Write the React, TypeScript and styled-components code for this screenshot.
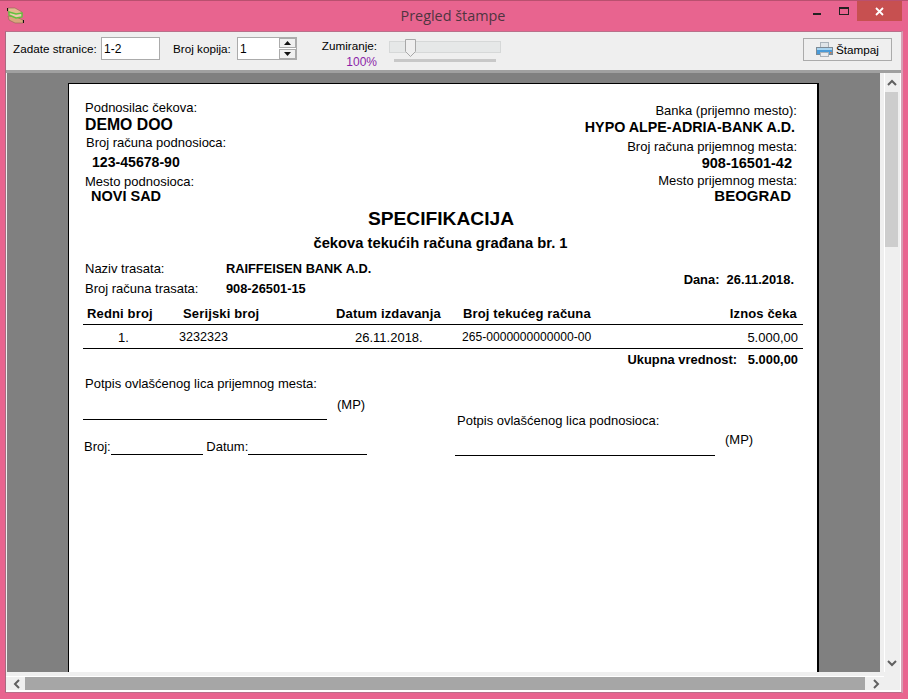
import React from "react";
import styled, {createGlobalStyle} from "styled-components";

const Global = createGlobalStyle`
    html, body {
        margin: 0;
        padding: 0;
        width: 908px;
        height: 699px;
        overflow: hidden;
    }
`;

const Win = styled.div`
    width: 908px;
    height: 699px;
    box-sizing: border-box;
    background: #e8648f;
    border-top: 1px solid #b9506f;
    display: flex;
    flex-direction: column;
    font-family: "Liberation Sans", Arial, sans-serif;
    color: #000;
`;

const TitleBar = styled.div`
    height: 30px;
    flex: none;
    display: flex;
    align-items: flex-start;
    position: relative;
    padding-left: 7px;
`;

const AppIcon = styled.svg`
    width: 17px;
    height: 17px;
    margin-top: 6px;
`;

const Title = styled.div`
    position: absolute;
    left: 0;
    right: 0;
    top: 6px;
    padding-right: 2px;
    text-align: center;
    font-family: "Open Sans", "Noto Sans", sans-serif;
    font-size: 14.4px;
    line-height: 18px;
    color: #4f3540;
`;

const Controls = styled.div`
    margin-left: auto;
    margin-right: 6px;
    display: flex;
`;

const Ctl = styled.div<{$w: number; $close?: boolean}>`
    width: ${p => p.$w}px;
    height: 20px;
    display: flex;
    align-items: center;
    justify-content: center;
    background: ${p => (p.$close ? "#c75050" : "transparent")};
`;

const Client = styled.div`
    flex: 1;
    margin: 0 5px 6px;
    background: #efefef;
    border-left: 1px solid #a86a80;
    border-top: 1px solid #b9708a;
    border-right: 2px solid #d7a0b4;
    border-bottom: 1px solid #b9708a;
    display: flex;
    flex-direction: column;
    min-height: 0;
`;

const Toolbar = styled.div`
    height: 38px;
    flex: none;
    background: #efefef;
    border-bottom: 3px solid #a0a0a0;
    display: flex;
    font-size: 11.7px;
    position: relative;
`;

const Label = styled.span<{$left: number; $w: number}>`
    margin-left: ${p => p.$left}px;
    width: ${p => p.$w}px;
    white-space: nowrap;
    margin-top: 9px;
    line-height: 15px;
`;

const Field = styled.div<{$w: number}>`
    width: ${p => p.$w}px;
    height: 23px;
    box-sizing: border-box;
    margin-top: 5px;
    margin-left: 4px;
    background: #fff;
    border: 1px solid #ababab;
    padding: 4px 2px 0 2px;
    line-height: 14px;
    font-size: 12px;
    position: relative;
`;

const Spin = styled.div`
    position: absolute;
    right: 0;
    top: 0;
    width: 17px;
    height: 21px;
    background: #fff;
    display: flex;
    flex-direction: column;
    gap: 1px;
`;

const SpinBtn = styled.div`
    flex: 1;
    background: #f0f0f0;
    border: 1px solid #ababab;
    display: flex;
    align-items: center;
    justify-content: center;
`;

const ZoomBox = styled.div`
    margin-left: 22px;
    width: 58px;
    text-align: right;
    padding-top: 6px;
    line-height: 15px;
`;

const Percent = styled.div`
    color: #8b1fa8;
    margin-top: 2px;
    line-height: 14px;
    font-size: 12px;
`;

const SliderWrap = styled.div`
    margin-left: 12px;
    width: 112px;
    position: relative;
`;

const Track = styled.div`
    position: absolute;
    left: 0;
    top: 9px;
    width: 110px;
    height: 10px;
    background: #e6e8e8;
    border: 1px solid #d6d8d8;
`;

const Ticks = styled.div`
    position: absolute;
    left: 5px;
    top: 27px;
    width: 102px;
    height: 3px;
    background: #c8c8c8;
`;

const Thumb = styled.svg`
    position: absolute;
    left: 16px;
    top: 7px;
`;

const PrintBtn = styled.div`
    margin-left: auto;
    margin-right: 9px;
    margin-top: 6px;
    width: 89px;
    height: 23px;
    box-sizing: border-box;
    border: 1px solid #ababab;
    background: #efefef;
    display: flex;
    align-items: center;
    padding-left: 12px;
    gap: 3px;
`;

const Body = styled.div`
    flex: 1;
    min-height: 0;
    display: grid;
    grid-template-columns: 1fr 16px;
    grid-template-rows: 1fr 18px;
    background: #efefef;
    border-bottom: 2px solid #fff;
    border-right: 1px solid #fff;
`;

const Preview = styled.div`
    background: #808080;
    margin-left: 1px;
    margin-right: 4px;
    padding: 10px 0 0 61px;
    overflow: hidden;
`;

const Sheet = styled.div`
    width: 751px;
    height: 700px;
    box-sizing: border-box;
    background: #fff;
    border: 1px solid #000;
    border-right-width: 2px;
    padding: 17px 20px 0 16px;
    font-size: 13px;
    line-height: 14px;
`;

const PartyRow = styled.div`
    display: flex;
    justify-content: space-between;
`;

const PartyCol = styled.div<{$right?: boolean}>`
    text-align: ${p => (p.$right ? "right" : "left")};
    display: flex;
    flex-direction: column;
`;

const Cap = styled.div<{$x?: number; $top?: number}>`
    margin-left: ${p => p.$x ?? 0}px;
    margin-top: ${p => p.$top ?? 0}px;
    line-height: 14px;
`;

const Val = styled.div<{$x?: number; $r?: number; $size?: number; $top?: number}>`
    font-weight: bold;
    font-size: ${p => p.$size ?? 14.5}px;
    line-height: 16px;
    margin-left: ${p => p.$x ?? 0}px;
    margin-right: ${p => p.$r ?? 0}px;
    margin-top: ${p => p.$top ?? 0}px;
`;

const Heading = styled.div`
    text-align: center;
    font-weight: bold;
    font-size: 19.2px;
    line-height: 20px;
    margin-top: 5px;
`;

const SubHeading = styled.div`
    text-align: center;
    font-weight: bold;
    font-size: 14.75px;
    line-height: 16px;
    margin-top: 6px;
    margin-right: 1px;
`;

const TraceRow = styled.div`
    display: flex;
    justify-content: space-between;
    margin-top: 10px;
`;

const TraceGrid = styled.div`
    display: grid;
    grid-template-columns: 141px auto;
    row-gap: 5px;
    line-height: 15px;
`;

const Strong = styled.span`
    font-weight: bold;
    font-size: 12.8px;
`;

const DateText = styled.div`
    font-weight: bold;
    font-size: 12.9px;
    margin-top: 12px;
    margin-right: 3px;
    white-space: pre;
`;

const TableHead = styled.div`
    display: grid;
    grid-template-columns: 87px 153px 126px 1fr 80px;
    margin: 11px -6px 0 -2px;
    height: 17px;
    border-bottom: 1px solid #000;
    font-weight: bold;
    line-height: 14px;
    letter-spacing: 0.15px;
`;

const Cell = styled.div<{$x?: number; $r?: number; $size?: number}>`
    padding-left: ${p => p.$x ?? 0}px;
    padding-right: ${p => p.$r ?? 0}px;
    text-align: ${p => (p.$r ? "right" : "left")};
    font-size: ${p => p.$size ?? 13}px;
    white-space: nowrap;
`;

const TableRow = styled.div`
    display: grid;
    grid-template-columns: 87px 153px 126px 1fr 80px;
    margin: 0 -6px 0 -2px;
    height: 23px;
    border-bottom: 1px solid #000;
    line-height: 25px;
`;

const Total = styled.div`
    display: flex;
    justify-content: flex-end;
    margin-top: 3px;
    margin-right: -1px;
    font-weight: bold;
    font-size: 12.9px;
    line-height: 16px;
    white-space: pre;
`;

const Signs = styled.div`
    display: flex;
    margin-left: -2px;
    margin-top: 9px;
`;

const SignLeft = styled.div`
    width: 372px;
    flex: none;
`;

const SignRight = styled.div`
    padding-top: 37px;
`;

const SignCap = styled.div<{$x?: number}>`
    margin-left: ${p => p.$x ?? 0}px;
    line-height: 14px;
`;

const LineRow = styled.div<{$top: number; $h: number; $w: number; $gap: number}>`
    display: grid;
    grid-template-columns: ${p => p.$w}px auto;
    column-gap: ${p => p.$gap}px;
    margin-top: ${p => p.$top}px;
    height: ${p => p.$h}px;
`;

const SignLine = styled.span`
    border-bottom: 1px solid #000;
`;

const Mp = styled.span<{$top?: number}>`
    margin-top: ${p => p.$top ?? 0}px;
    line-height: 14px;
`;

const NoRow = styled.div`
    display: flex;
    align-items: flex-end;
    margin-top: 19px;
    margin-left: 1px;
    line-height: 14px;
`;

const Blank = styled.span<{$w: number}>`
    width: ${p => p.$w}px;
    height: 15px;
    margin-bottom: -1px;
    border-bottom: 1px solid #000;
    display: inline-block;
`;

const VScroll = styled.div`
    background: #efefef;
    border-left: 1px solid #fff;
    display: flex;
    flex-direction: column;
    align-items: center;
    padding: 6px 2px 5px 0;
`;

const ChevronSvg = styled.svg`
    flex: none;
`;

const VThumb = styled.div`
    width: 13px;
    height: 155px;
    margin-top: 5px;
    margin-bottom: auto;
    background: #cdcdcd;
`;

const HScroll = styled.div`
    background: #efefef;
    padding-top: 4px;
`;

const HRail = styled.div`
    height: 14px;
    box-sizing: border-box;
    border-top: 1px solid #fff;
    display: flex;
    align-items: center;
    padding: 0 4px 0 7px;
`;

const HThumb = styled.div`
    flex: 1;
    height: 13px;
    margin: 0 7px 0 4px;
    background: #a6a6a6;
`;

const Corner = styled.div`
    background: #efefef;
`;

function Chevron({dir}: {dir: "up" | "down" | "left" | "right"}) {
    const paths = {
        up: "M1 6 L5 2 L9 6",
        down: "M1 2 L5 6 L9 2",
        left: "M6 1 L2 5 L6 9",
        right: "M2 1 L6 5 L2 9",
    };
    const horiz = dir === "left" || dir === "right";
    return (
        <ChevronSvg
            width={horiz ? 8 : 10}
            height={horiz ? 10 : 8}
            viewBox={horiz ? "0 0 8 10" : "0 0 10 8"}
        >
            <path d={paths[dir]} fill="none" stroke="#606060" strokeWidth="2"/>
        </ChevronSvg>
    );
}

function PrinterIcon() {
    return (
        <svg width="17" height="17" viewBox="0 0 17 17">
            <rect x="4.5" y="1.5" width="8" height="6" fill="#dfe4e8" stroke="#a9b2ba"/>
            <rect x="0.5" y="6.5" width="16" height="7" fill="#4a9bd8" stroke="#7c8a96"/>
            <rect x="1" y="7" width="15" height="2" fill="#a9d4f0"/>
            <rect x="4.5" y="11.5" width="8" height="4" fill="#e8ebee" stroke="#a9b2ba"/>
            <rect x="14" y="11" width="1.5" height="1.5" fill="#e87a30"/>
        </svg>
    );
}

function SandwichIcon() {
    return (
        <AppIcon viewBox="0 0 17 17">
            <path d="M1 1 L8 1 L15 5 L15 9 L8 7 L1 5 Z" fill="#e3b98f" stroke="#8a6a50" strokeWidth="0.6"/>
            <path d="M1 9 L9 10 L16 13 L16 16 L8 16 L2 13 Z" fill="#d9a57c" stroke="#8a6a50" strokeWidth="0.6"/>
            <path d="M2 5 L9 7 L15 6 L15 10 L9 11 L2 8 Z" fill="#efc9b0" stroke="#62c23e" strokeWidth="1.4"/>
            <rect x="0" y="1" width="1" height="3" fill="#111"/>
            <rect x="16" y="13" width="1" height="3" fill="#111"/>
        </AppIcon>
    );
}

export default function App() {
    return (
        <Win>
            <Global/>
            <TitleBar>
                <SandwichIcon/>
                <Title>Pregled štampe</Title>
                <Controls>
                    <Ctl $w={26}>
                        <svg width="9" height="9" viewBox="0 0 9 9"><rect x="0" y="6" width="8" height="2" fill="#222"/></svg>
                    </Ctl>
                    <Ctl $w={27}>
                        <svg width="10" height="9" viewBox="0 0 10 9"><rect x="0.5" y="0.5" width="9" height="7" fill="none" stroke="#222"/><rect x="0" y="0" width="10" height="2" fill="#222"/></svg>
                    </Ctl>
                    <Ctl $w={45} $close>
                        <svg width="9" height="9" viewBox="0 0 9 9"><path d="M1 1 L8 8 M8 1 L1 8" stroke="#fff" strokeWidth="1.8"/></svg>
                    </Ctl>
                </Controls>
            </TitleBar>
            <Client>
                <Toolbar>
                    <Label $left={7} $w={84}>Zadate stranice:</Label>
                    <Field $w={59}>1-2</Field>
                    <Label $left={13} $w={60}>Broj kopija:</Label>
                    <Field $w={60}>
                        1
                        <Spin>
                            <SpinBtn>
                                <svg width="7" height="4" viewBox="0 0 7 4"><path d="M3.5 0 L7 4 L0 4 Z" fill="#111"/></svg>
                            </SpinBtn>
                            <SpinBtn>
                                <svg width="7" height="4" viewBox="0 0 7 4"><path d="M0 0 L7 0 L3.5 4 Z" fill="#111"/></svg>
                            </SpinBtn>
                        </Spin>
                    </Field>
                    <ZoomBox>
                        Zumiranje:
                        <Percent>100%</Percent>
                    </ZoomBox>
                    <SliderWrap>
                        <Track/>
                        <Ticks/>
                        <Thumb width="11" height="18" viewBox="0 0 11 18">
                            <path d="M0.5 0.5 H10.5 V12.5 L5.5 17.5 L0.5 12.5 Z" fill="#efefef" stroke="#a8a8a8"/>
                        </Thumb>
                    </SliderWrap>
                    <PrintBtn>
                        <PrinterIcon/>
                        Štampaj
                    </PrintBtn>
                </Toolbar>
                <Body>
                    <Preview>
                        <Sheet>
                            <PartyRow>
                                <PartyCol>
                                    <Cap>Podnosilac čekova:</Cap>
                                    <Val $size={15.8} $top={2}>DEMO DOO</Val>
                                    <Cap $x={1} $top={3}>Broj računa podnosioca:</Cap>
                                    <Val $x={7} $size={14.1} $top={4}>123-45678-90</Val>
                                    <Cap $top={5}>Mesto podnosioca:</Cap>
                                    <Val $x={6} $top={-1}>NOVI SAD</Val>
                                </PartyCol>
                                <PartyCol $right>
                                    <Cap $top={3}>Banka (prijemno mesto):</Cap>
                                    <Val $r={2} $size={14.3} $top={1}>HYPO ALPE-ADRIA-BANK A.D.</Val>
                                    <Cap $top={5}>Broj računa prijemnog mesta:</Cap>
                                    <Val $r={5} $top={1}>908-16501-42</Val>
                                    <Cap $top={3}>Mesto prijemnog mesta:</Cap>
                                    <Val $r={6} $size={15} $top={0}>BEOGRAD</Val>
                                </PartyCol>
                            </PartyRow>
                            <Heading>SPECIFIKACIJA</Heading>
                            <SubHeading>čekova tekućih računa građana br. 1</SubHeading>
                            <TraceRow>
                                <TraceGrid>
                                    <span>Naziv trasata:</span>
                                    <Strong>RAIFFEISEN BANK A.D.</Strong>
                                    <span>Broj računa trasata:</span>
                                    <Strong>908-26501-15</Strong>
                                </TraceGrid>
                                <DateText>{"Dana:  26.11.2018."}</DateText>
                            </TraceRow>
                            <TableHead>
                                <Cell $x={4}>Redni broj</Cell>
                                <Cell $x={13}>Serijski broj</Cell>
                                <Cell $x={13}>Datum izdavanja</Cell>
                                <Cell $x={14}>Broj tekućeg računa</Cell>
                                <Cell $r={6}>Iznos čeka</Cell>
                            </TableHead>
                            <TableRow>
                                <Cell $x={35}>1.</Cell>
                                <Cell $x={9} $size={12.6}>3232323</Cell>
                                <Cell $x={32}>26.11.2018.</Cell>
                                <Cell $x={13} $size={12.1}>265-0000000000000-00</Cell>
                                <Cell $r={5}>5.000,00</Cell>
                            </TableRow>
                            <Total>{"Ukupna vrednost:   5.000,00"}</Total>
                            <Signs>
                                <SignLeft>
                                    <SignCap $x={2}>Potpis ovlašćenog lica prijemnog mesta:</SignCap>
                                    <LineRow $top={-1} $h={30} $w={244} $gap={10}>
                                        <SignLine/>
                                        <Mp $top={8}>(MP)</Mp>
                                    </LineRow>
                                    <NoRow>
                                        Broj:<Blank $w={92}/>&nbsp;Datum:<Blank $w={119}/>
                                    </NoRow>
                                </SignLeft>
                                <SignRight>
                                    <SignCap $x={2}>Potpis ovlašćenog lica podnosioca:</SignCap>
                                    <LineRow $top={0} $h={28} $w={260} $gap={10}>
                                        <SignLine/>
                                        <Mp $top={5}>(MP)</Mp>
                                    </LineRow>
                                </SignRight>
                            </Signs>
                        </Sheet>
                    </Preview>
                    <VScroll>
                        <Chevron dir="up"/>
                        <VThumb/>
                        <Chevron dir="down"/>
                    </VScroll>
                    <HScroll>
                        <HRail>
                            <Chevron dir="left"/>
                            <HThumb/>
                            <Chevron dir="right"/>
                        </HRail>
                    </HScroll>
                    <Corner/>
                </Body>
            </Client>
        </Win>
    );
}
